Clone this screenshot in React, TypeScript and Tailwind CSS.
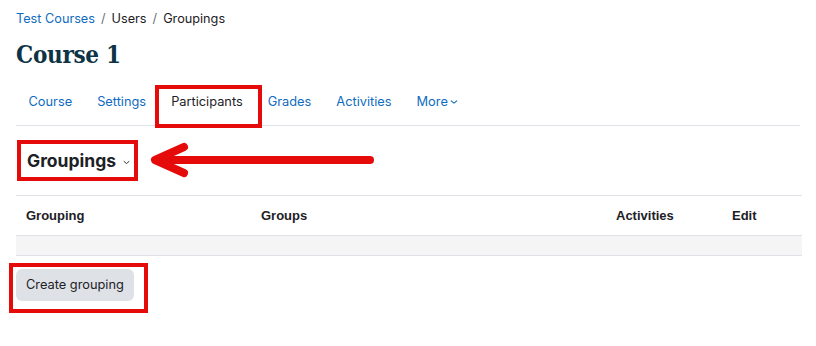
import React from 'react';

const tabs = ['Course', 'Settings', 'Participants', 'Grades', 'Activities', 'More'];

const Chevron = ({ className }: { className?: string }) => (
  <svg viewBox="0 0 10 6" className={className} fill="none" stroke="currentColor" strokeWidth="1.3">
    <path d="M1.5 1.5 5 4.5 8.5 1.5" strokeLinecap="round" strokeLinejoin="round" />
  </svg>
);

const App: React.FC = () => {
  return (
    <div className="w-[816px] h-[346px] bg-white overflow-hidden text-[#1d2125]" style={{ fontFamily: 'Inter, "Noto Sans", sans-serif' }}>
      <div className="px-4 pt-[10px]">
        {/* breadcrumb */}
        <div className="flex items-center gap-[6px] text-[12.7px] leading-[17px]">
          <span className="text-[#0f6cbf]">Test Courses</span>
          <span className="text-[#6a737b]">/</span>
          <span>Users</span>
          <span className="text-[#6a737b]">/</span>
          <span>Groupings</span>
        </div>

        <h1
          className="mt-[12px] text-[24px] leading-[32px] font-bold tracking-[-0.3px] text-[#0c3446]"
          style={{ fontFamily: '"DejaVu Serif Condensed", "DejaVu Serif", serif' }}
        >
          Course 1
        </h1>

        {/* secondary nav */}
        <div className="mt-[10px] flex h-[45px] items-start border-b border-[#dee2e6] text-[12.8px] leading-[17px]">
          {tabs.map((t) => (
            <div key={t} className="relative flex h-full items-start px-[12.5px] pt-[12px]">
              {t === 'Participants' ? (
                <>
                  <span className="text-[#1d2125]">{t}</span>
                  <span className="absolute left-[-4px] right-[-7px] top-[4px] bottom-[-3px] border-[4px] border-[#e50b0b]" />
                </>
              ) : t === 'More' ? (
                <span className="flex items-center gap-[2px] text-[#0f6cbf]">
                  {t}
                  <Chevron className="w-[8px] h-[6px]" />
                </span>
              ) : (
                <span className="text-[#0f6cbf]">{t}</span>
              )}
            </div>
          ))}
        </div>

        {/* heading + arrow */}
        <div className="relative flex h-[69px] items-center">
          <div className="ml-[1px] flex h-[41px] w-[121px] items-center gap-[7px] border-[4px] border-[#e50b0b] pl-[6px]">
            <span className="text-[17.5px] font-bold leading-none">Groupings</span>
            <Chevron className="w-[7px] h-[5px] mt-[3px]" />
          </div>
          <svg className="absolute left-[132px] top-[15px]" width="242" height="38" viewBox="0 0 242 38">
            <path d="M222 19 H12" stroke="#e50b0b" strokeWidth="8" strokeLinecap="round" />
            <path d="M36 6 L7 19 L36 32" stroke="#e50b0b" strokeWidth="8" fill="none" strokeLinecap="round" strokeLinejoin="round" />
          </svg>
        </div>

        {/* table */}
        <div className="w-[786px] border-t border-[#dee2e6]" style={{ fontFamily: '"Liberation Sans", Arial, sans-serif' }}>
          <div className="grid h-[40px] grid-cols-[245px_355px_116px_70px] items-center border-b border-[#dee2e6] text-[13px] font-bold">
            <span className="pl-[10px]">Grouping</span>
            <span>Groups</span>
            <span>Activities</span>
            <span>Edit</span>
          </div>
          <div className="h-[20px] border-b border-[#dee2e6] bg-[#f5f5f5]" />
        </div>

        {/* button */}
        <div className="relative mt-[13px] inline-flex">
          <button className="h-[32px] rounded-[6px] bg-[#dee2e6] px-[10px] text-[12.8px] text-[#1d2125]">Create grouping</button>
          <span className="absolute left-[-7px] right-[-14px] top-[-6px] bottom-[-12px] border-[4px] border-[#e50b0b]" />
        </div>
      </div>
    </div>
  );
};

export default App;
